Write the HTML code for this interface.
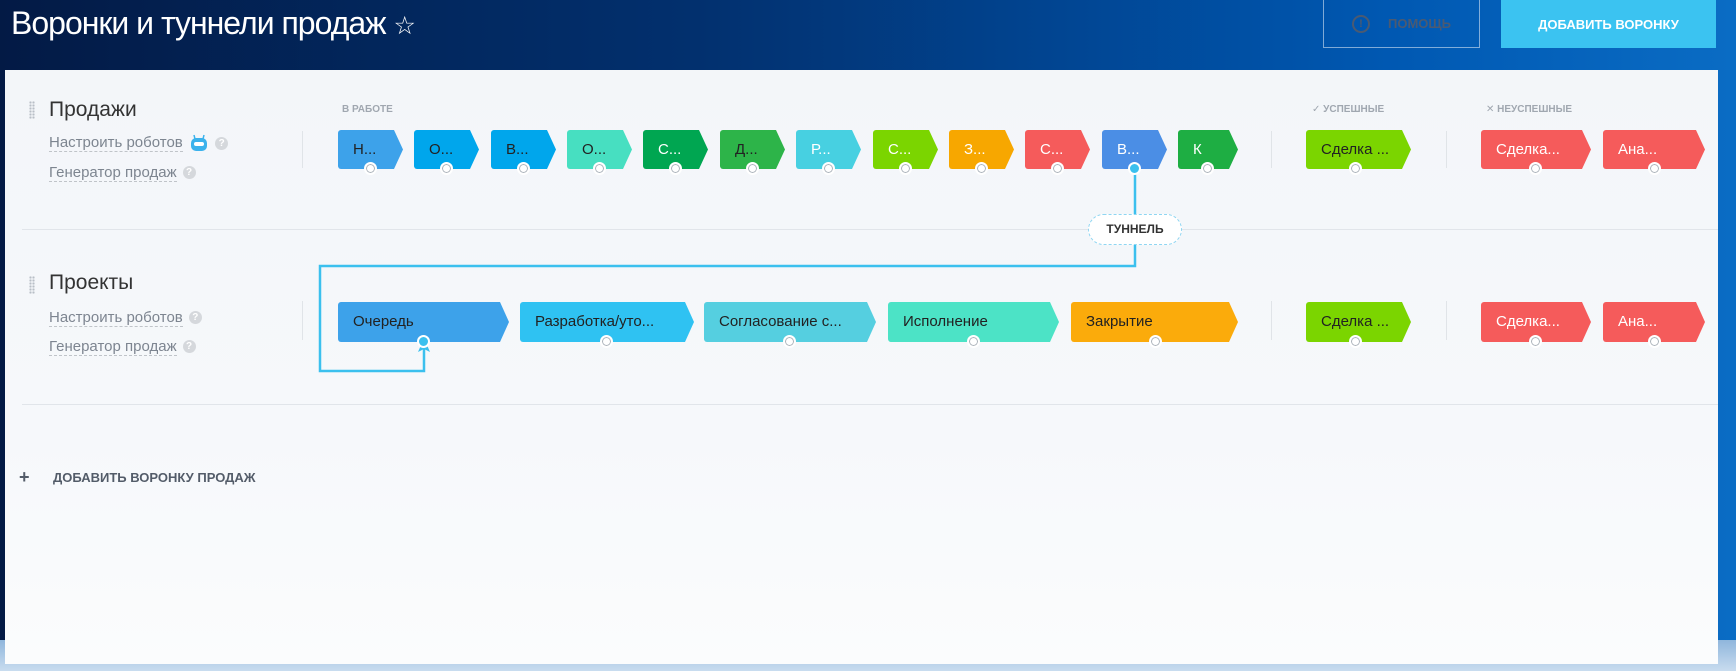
<!DOCTYPE html>
<html><head><meta charset="utf-8"><style>
*{margin:0;padding:0;box-sizing:border-box}
body{width:1736px;height:671px;overflow:hidden;font-family:"Liberation Sans","DejaVu Sans",sans-serif;background:linear-gradient(90deg,#031a45 0%,#02306e 40%,#0058b2 80%,#0a6cc4 100%);position:relative}
.sky{position:absolute;left:0;top:640px;width:1736px;height:31px;background:linear-gradient(180deg,#8fb6dc,#c9dcef)}
.title{position:absolute;left:11px;top:5px;color:#fff;font-size:32px;font-weight:300;letter-spacing:-1px}
.btn{position:absolute;top:0;height:48px;font-size:13px;font-weight:bold;display:flex;align-items:center;justify-content:center}
.help{left:1323px;width:157px;border:1px solid rgba(255,255,255,.5);border-top:none;color:#4a5a72}
.add{left:1501px;width:215px;background:#3bc3f1;color:#fff}
.panel{position:absolute;left:5px;top:70px;width:1713px;height:594px;background:linear-gradient(180deg,#f3f6f9 0%,#f6f8fb 60%,#fbfcfd 100%)}
.abs{position:absolute}
.h{font-size:21px;color:#333}
.lnk{font-size:15px;color:#7d8590;border-bottom:1px dashed #c0c4c9;line-height:18px}
.q{display:inline-block;width:13px;height:13px;border-radius:50%;background:#d5d8dc;color:#fff;font-size:10px;text-align:center;line-height:13px;font-weight:bold;vertical-align:middle;margin-left:6px}
.drag{width:6px;height:18px;background-image:radial-gradient(#b8bec6 1px,transparent 1.3px);background-size:3px 3px}
.sep{width:1px;background:#e0e4e8}
.hr{height:1px;background:#e1e5ea}
.lab{font-size:10px;font-weight:bold;color:#a0a7b0}
.st{position:absolute;height:39px;clip-path:polygon(0 0,calc(100% - 9px) 0,100% 50%,calc(100% - 9px) 100%,0 100%);border-radius:3px 0 0 3px;font-size:15px;padding-left:15px;line-height:39px;white-space:nowrap;overflow:hidden;color:#fff}
.dk{color:#222}
.c{position:absolute;width:13px;height:13px;border-radius:50%;background:#fff;border:2px solid #fff;box-shadow:inset 0 0 0 1px #a8b0b8}
</style></head><body>
<div class="sky"></div>
<div class="title">Воронки и туннели продаж <span style="font-size:25px">☆</span></div>
<div class="btn help"><span style="display:inline-block;width:18px;height:18px;border:2px solid #4a5a72;border-radius:50%;font-size:11px;line-height:14px;text-align:center;margin-right:18px">!</span>ПОМОЩЬ</div>
<div class="btn add">ДОБАВИТЬ ВОРОНКУ</div>
<div class="panel"></div>

<div class="abs drag" style="left:29px;top:101px"></div>
<div class="abs h" style="left:49px;top:98px">Продажи</div>
<div class="abs" style="left:49px;top:134px"><span class="lnk">Настроить роботов</span> <svg width="20" height="18" viewBox="0 0 20 18" style="vertical-align:middle;margin-left:2px"><path d="M5 1 L6 5 M15 1 L14 5" stroke="#3bb2ec" stroke-width="1.5"/><rect x="2" y="4" width="16" height="13" rx="5" fill="#3bb2ec"/><rect x="5" y="8" width="10" height="4" rx="2" fill="#fff"/></svg><span class="q">?</span></div>
<div class="abs" style="left:49px;top:164px"><span class="lnk">Генератор продаж</span><span class="q">?</span></div>
<div class="abs sep" style="left:302px;top:131px;height:37px"></div>
<div class="abs lab" style="left:342px;top:104px">В РАБОТЕ</div>
<div class="abs lab" style="left:1312px;top:104px">✓ УСПЕШНЫЕ</div>
<div class="abs lab" style="left:1486px;top:104px">✕ НЕУСПЕШНЫЕ</div>
<div class="abs sep" style="left:1271px;top:131px;height:37px"></div>
<div class="abs sep" style="left:1446px;top:131px;height:37px"></div>

<div class="st dk" style="left:338px;top:130px;width:65px;background:#3da2ea">Н...</div>
<div class="st dk" style="left:414px;top:130px;width:65px;background:#00a6ec">О...</div>
<div class="st dk" style="left:491px;top:130px;width:65px;background:#00a6ec">В...</div>
<div class="st dk" style="left:567px;top:130px;width:65px;background:#47dfc1">О...</div>
<div class="st" style="left:643px;top:130px;width:65px;background:#00a651">С...</div>
<div class="st dk" style="left:720px;top:130px;width:65px;background:#2db449">Д...</div>
<div class="st" style="left:796px;top:130px;width:65px;background:#47d0e1">Р...</div>
<div class="st" style="left:873px;top:130px;width:65px;background:#7bd500">С...</div>
<div class="st" style="left:949px;top:130px;width:65px;background:#f7a700">З...</div>
<div class="st" style="left:1025px;top:130px;width:65px;background:#f55b5b">С...</div>
<div class="st" style="left:1102px;top:130px;width:65px;background:#4b8ee5">В...</div>
<div class="st" style="left:1178px;top:130px;width:60px;background:#1eae43">К</div>
<div class="st dk" style="left:1306px;top:130px;width:105px;background:#7bd500">Сделка ...</div>
<div class="st" style="left:1481px;top:130px;width:110px;background:#f55b5b">Сделка...</div>
<div class="st" style="left:1603px;top:130px;width:102px;background:#f55b5b">Ана...</div>

<svg class="abs" style="left:0;top:0" width="1736" height="671">
<path d="M1135 169 V266 H320 V371 H424 V345" fill="none" stroke="#3bc0ee" stroke-width="2.5"/>
<path d="M424 338 L418 352 L424 349 L430 352 Z" fill="#3bc0ee"/>
</svg>

<div class="abs hr" style="left:22px;top:229px;width:1696px"></div>
<div class="abs" style="left:1088px;top:214px;width:94px;height:31px;border:1px dashed #8fd6f2;border-radius:16px;background:#fff;font-size:12px;font-weight:bold;color:#333;text-align:center;line-height:29px">ТУННЕЛЬ</div>

<div class="abs drag" style="left:29px;top:276px"></div>
<div class="abs h" style="left:49px;top:271px">Проекты</div>
<div class="abs" style="left:49px;top:309px"><span class="lnk">Настроить роботов</span><span class="q">?</span></div>
<div class="abs" style="left:49px;top:338px"><span class="lnk">Генератор продаж</span><span class="q">?</span></div>
<div class="abs sep" style="left:302px;top:301px;height:39px"></div>
<div class="abs sep" style="left:1271px;top:301px;height:39px"></div>
<div class="abs sep" style="left:1446px;top:301px;height:39px"></div>

<div class="st dk" style="left:338px;top:302px;width:171px;height:40px;line-height:40px;background:#3da2ea">Очередь</div>
<div class="st dk" style="left:520px;top:302px;width:174px;height:40px;line-height:40px;background:#2fc2f2">Разработка/уто...</div>
<div class="st dk" style="left:704px;top:302px;width:172px;height:40px;line-height:40px;background:#55cfe0">Согласование с...</div>
<div class="st dk" style="left:888px;top:302px;width:171px;height:40px;line-height:40px;background:#4ce3c6">Исполнение</div>
<div class="st dk" style="left:1071px;top:302px;width:167px;height:40px;line-height:40px;background:#fbab0b">Закрытие</div>
<div class="st dk" style="left:1306px;top:302px;width:105px;height:40px;line-height:40px;background:#7bd500">Сделка ...</div>
<div class="st" style="left:1481px;top:302px;width:110px;height:40px;line-height:40px;background:#f55b5b">Сделка...</div>
<div class="st" style="left:1603px;top:302px;width:102px;height:40px;line-height:40px;background:#f55b5b">Ана...</div>

<div class="c" style="left:364px;top:162px"></div>
<div class="c" style="left:440px;top:162px"></div>
<div class="c" style="left:517px;top:162px"></div>
<div class="c" style="left:593px;top:162px"></div>
<div class="c" style="left:669px;top:162px"></div>
<div class="c" style="left:746px;top:162px"></div>
<div class="c" style="left:822px;top:162px"></div>
<div class="c" style="left:899px;top:162px"></div>
<div class="c" style="left:975px;top:162px"></div>
<div class="c" style="left:1051px;top:162px"></div>
<div class="c" style="left:1128px;top:162px;background:#3bc0ee;box-shadow:none"></div>
<div class="c" style="left:1201px;top:162px"></div>
<div class="c" style="left:1349px;top:162px"></div>
<div class="c" style="left:1529px;top:162px"></div>
<div class="c" style="left:1648px;top:162px"></div>
<div class="c" style="left:417px;top:335px;background:#3bc0ee;box-shadow:none"></div>
<div class="c" style="left:600px;top:335px"></div>
<div class="c" style="left:783px;top:335px"></div>
<div class="c" style="left:967px;top:335px"></div>
<div class="c" style="left:1149px;top:335px"></div>
<div class="c" style="left:1349px;top:335px"></div>
<div class="c" style="left:1529px;top:335px"></div>
<div class="c" style="left:1648px;top:335px"></div>

<div class="abs hr" style="left:22px;top:404px;width:1696px"></div>
<div class="abs" style="left:19px;top:467px;font-size:18px;font-weight:bold;color:#535c69">+</div>
<div class="abs" style="left:53px;top:470px;font-size:13px;font-weight:bold;color:#535c69">ДОБАВИТЬ ВОРОНКУ ПРОДАЖ</div>
</body></html>
